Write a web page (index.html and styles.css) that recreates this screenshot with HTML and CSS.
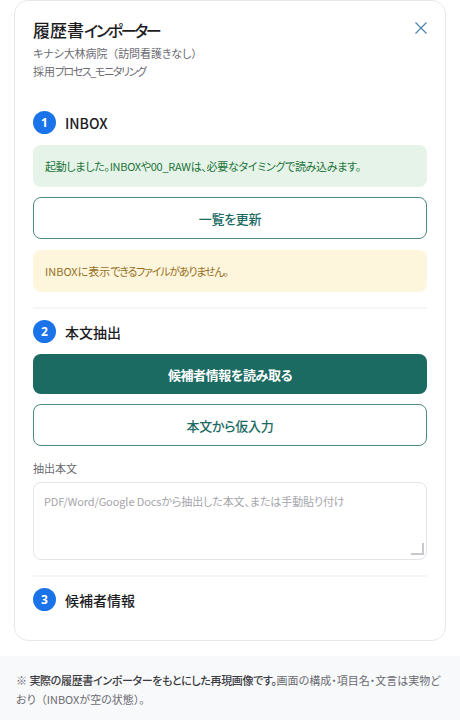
FILE: index.html
```html
<!DOCTYPE html>
<html lang="ja">

<head>
    <meta charset="UTF-8">
    <meta name="viewport" content="width=device-width, initial-scale=1.0">
    <title>履歴書インポーター</title>
    <link rel="stylesheet" href="styles.css">
</head>

<body>
    <div class="page">
        <div class="card">
            <div class="header">
                <div>
                    <h1>履歴書<span class="kana">インポーター</span></h1>
                    <p class="sub">キナシ大林病院<span class="full">（</span>訪問看護きなし<span class="full">）</span></p>
                    <p class="sub">採用<span class="kana">プロセス_モニタリング</span></p>
                </div>
                <button class="close" title="close">
                    <svg xmlns="http://www.w3.org/2000/svg" width="12" height="12" viewBox="0 0 12 12" fill="none" stroke="#4a7fa8" stroke-width="1.1">
                        <path d="M.5 .5l11 11M11.5 .5l-11 11" />
                    </svg>
                </button>
            </div>

            <div class="section first">
                <div class="sectionHead"><span class="num">1</span><h2>INBOX</h2></div>
                <div class="notice ok">起動しました。INBOXや00_RAWは、必要なタイミングで読み込みます。</div>
                <button class="btn outline">一覧を更新</button>
                <div class="notice warn">INBOXに表示<span class="kana">できるファイルがありません。</span></div>
            </div>

            <div class="section">
                <div class="sectionHead"><span class="num">2</span><h2>本文抽出</h2></div>
                <button class="btn primary">候補者情報を読み取る</button>
                <button class="btn outline">本文から仮入力</button>
                <div class="field">
                    <label for="body">抽出本文</label>
                    <div class="textWrap">
                        <textarea id="body" placeholder="PDF/Word/Google Docsから抽出した本文、または手動貼り付け"></textarea>
                    </div>
                </div>
            </div>

            <div class="section">
                <div class="sectionHead"><span class="num">3</span><h2>候補者情報</h2></div>
            </div>
        </div>
    </div>
    <div class="footnote"><span>※ </span><strong>実際の履歴書インポーターをもとにした再現画像です。</strong><span>画面の構成・項目名・文言は実物ど</span><span>おり</span><span class="full">（</span><span>INBOXが空の状態</span><span class="full">）</span><span>。</span></div>
</body>

</html>
```

FILE: styles.css
```css
* {
    box-sizing: border-box;
}

body {
    margin: 0;
    background-color: #fff;
    color: #1c1c1f;
    font-family: "Noto Sans CJK JP", "Noto Sans", sans-serif;
    font-feature-settings: "palt";
}

.full {
    font-feature-settings: normal;
}

.page {
    padding: 0 14px 15px;
}

.card {
    border: 1px solid #e7e8ec;
    border-radius: 14px;
    padding: 18px 18px 28px;
    height: 641px;
}

.header {
    display: flex;
    justify-content: space-between;
    align-items: flex-start;
}

h1 {
    margin: 0 0 3px;
    height: 22px;
    font-size: 17px;
    line-height: 22px;
    font-weight: 500;
}

h1 .kana {
    font-size: 16px;
    letter-spacing: -.145em;
}

.sub {
    margin: 0;
    font-size: 11px;
    line-height: 18px;
    letter-spacing: -.1px;
    color: #6b6b72;
}

.sub .kana {
    letter-spacing: -.13em;
}

.close {
    display: flex;
    background-color: transparent;
    border: none;
    padding: 3px 0 0;
    cursor: pointer;
}

.section {
    display: flex;
    flex-direction: column;
    gap: 10px;
    border-top: 2px solid #f6f6f8;
    margin-top: 15px;
    padding-top: 11px;
}

.section.first {
    border-top: none;
    margin-top: 31px;
    padding-top: 0;
}

.sectionHead {
    display: flex;
    align-items: center;
    gap: 9px;
    height: 23px;
    margin-bottom: 1px;
}

.num {
    width: 23px;
    height: 23px;
    border-radius: 50%;
    background-color: #1a73e8;
    color: #fff;
    font-family: "Noto Sans", sans-serif;
    font-size: 12px;
    font-weight: 700;
    line-height: 23px;
    text-align: center;
}

h2 {
    margin: 0;
    font-size: 14px;
    font-weight: 500;
}

.notice {
    height: 42px;
    padding: 0 12px;
    border-radius: 8px;
    font-size: 11px;
    line-height: 42px;
}

.ok {
    background-color: #e6f3e8;
    color: #22743a;
    letter-spacing: -.3px;
}

.warn {
    margin-top: 1px;
    background-color: #fdf5dc;
    color: #96701f;
}

.warn .kana {
    letter-spacing: -.11em;
}

.btn {
    height: 42px;
    border-radius: 8px;
    font-family: inherit;
    font-feature-settings: inherit;
    font-size: 13px;
    font-weight: 500;
    letter-spacing: -.3px;
    cursor: pointer;
}

.outline {
    background-color: #fff;
    border: 1px solid #4d8a82;
    color: #1b6b63;
}

.primary {
    height: 40px;
    background-color: #1b6b63;
    border: none;
    color: #fff;
    font-weight: 700;
    letter-spacing: -.4px;
}

.field {
    display: flex;
    flex-direction: column;
    gap: 7px;
    margin-top: 5px;
}

label {
    font-size: 11px;
    line-height: 14px;
    color: #6b6b72;
}

.textWrap {
    display: flex;
    position: relative;
}

.textWrap::after {
    content: "";
    position: absolute;
    right: 3px;
    bottom: 5px;
    width: 11px;
    height: 10px;
    border-right: 2px solid #c9c9cd;
    border-bottom: 2px solid #c9c9cd;
}

textarea {
    width: 100%;
    height: 78px;
    padding: 10px 10px;
    border: 1px solid #e3e3e8;
    border-radius: 8px;
    font-family: inherit;
    font-feature-settings: inherit;
    font-size: 11px;
    line-height: 16px;
    letter-spacing: -.1px;
    outline: none;
    resize: none;
}

textarea::placeholder {
    color: #a5a5ab;
}

.footnote {
    background-color: #f8f9fb;
    padding: 15px 16px 0;
    height: 65px;
    font-size: 11px;
    line-height: 19px;
    color: #6b6b72;
}

.footnote strong {
    font-weight: 500;
    color: #3a3a40;
    letter-spacing: -.35px;
}
```
